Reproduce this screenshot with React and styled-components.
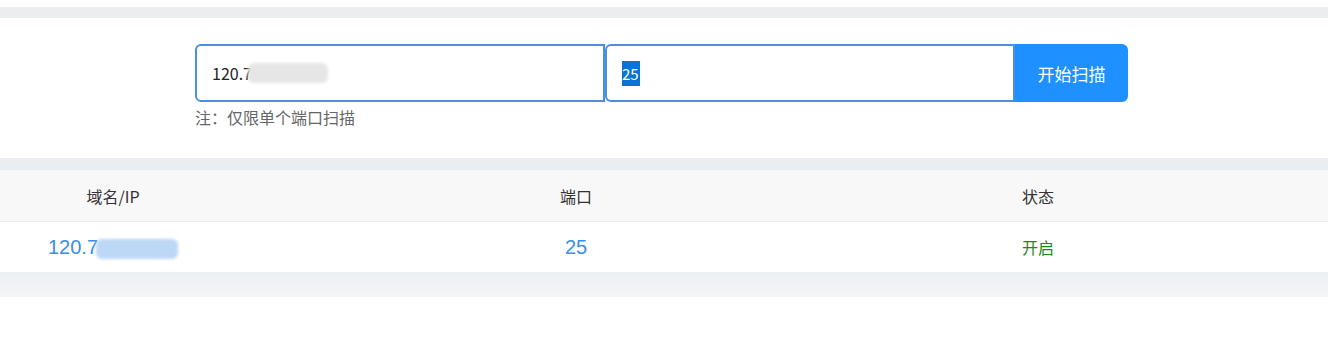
import styled, { createGlobalStyle } from "styled-components";

const GlobalStyle = createGlobalStyle`
  body {
    margin: 0;
    background: #fff;
    font-family: "Noto Sans CJK SC", "Noto Sans", sans-serif;
  }
`;

const rows = [{ ip: "120.7", port: "25", status: "开启" }];

const App = () => {
  return (
    <Page>
      <GlobalStyle />
      <Band $h={11} />
      <Panel>
        <Form>
          <Field>
            <FieldText>120.7</FieldText>
            <Blur $w={80} $h={20} $shift={-4} $tone="#e6e6e6" />
          </Field>
          <Field>
            <Selected>25</Selected>
          </Field>
          <ScanButton>开始扫描</ScanButton>
        </Form>
        <Note>注：仅限单个端口扫描</Note>
      </Panel>
      <Band $h={12} />
      <Table>
        <HeadRow>
          <Cell>域名/IP</Cell>
          <Cell>端口</Cell>
          <Cell>状态</Cell>
          <Cell />
        </HeadRow>
        {rows.map((r) => (
          <BodyRow key={r.ip}>
            <Cell>
              <Link>
                {r.ip}
                <Blur $w={82} $h={20} $shift={-2} $tone="#bcd8f6" />
              </Link>
            </Cell>
            <Cell>
              <Link>{r.port}</Link>
            </Cell>
            <Cell>
              <Status>{r.status}</Status>
            </Cell>
            <Cell />
          </BodyRow>
        ))}
      </Table>
      <BottomBand />
    </Page>
  );
};

export default App;

const Page = styled.div`
  padding-top: 7px;
  height: 351px;
  box-sizing: border-box;
`;

const Band = styled.div`
  height: ${(p) => p.$h}px;
  background: #ebeef1;
`;

const Panel = styled.section`
  height: 140px;
  box-sizing: border-box;
  padding: 26px 0 0 195px;
`;

const Form = styled.div`
  display: flex;
  width: 933px;
  height: 58px;
`;

const Field = styled.div`
  display: flex;
  align-items: center;
  width: 410px;
  box-sizing: border-box;
  border: 2px solid #4a90e2;
  border-radius: 6px 0 0 6px;
  padding-left: 15px;
  font-size: 16px;
  color: #222;
`;

const FieldText = styled.span`
  line-height: 1;
`;

const Blur = styled.span`
  display: inline-block;
  width: ${(p) => p.$w}px;
  height: ${(p) => p.$h}px;
  margin-left: ${(p) => p.$shift}px;
  border-radius: 6px;
  background: ${(p) => p.$tone};
  filter: blur(1.5px);
  vertical-align: middle;
`;

const Selected = styled.span`
  background: #0a74d6;
  color: #fff;
  font-size: 15px;
  line-height: 25px;
  padding: 0 1px 0 0;
`;

const ScanButton = styled.button`
  width: 113px;
  border: none;
  border-radius: 0 6px 6px 0;
  background: #1e90ff;
  color: #fff;
  font-family: inherit;
  font-size: 17px;
  padding: 0;
`;

const Note = styled.div`
  margin-top: 3px;
  font-size: 16px;
  color: #666;
`;

const Table = styled.div``;

const HeadRow = styled.div`
  display: grid;
  grid-template-columns: 226px 700px 224px 1fr;
  height: 51px;
  align-items: center;
  background: #f8f8f8;
  border-bottom: 1px solid #ebebeb;
  font-size: 16px;
  color: #333;
`;

const BodyRow = styled(HeadRow)`
  height: 50px;
  background: #fff;
  border-bottom: none;
`;

const Cell = styled.div`
  text-align: center;
`;

const Link = styled.span`
  color: #3a8ee6;
  font-family: "Liberation Sans", Arial, sans-serif;
  font-size: 20px;
`;

const Status = styled.span`
  color: #1a8a1a;
  font-size: 16px;
`;

const BottomBand = styled.div`
  height: 25px;
  background: linear-gradient(#edf0f3, #f3f5f7);
`;
